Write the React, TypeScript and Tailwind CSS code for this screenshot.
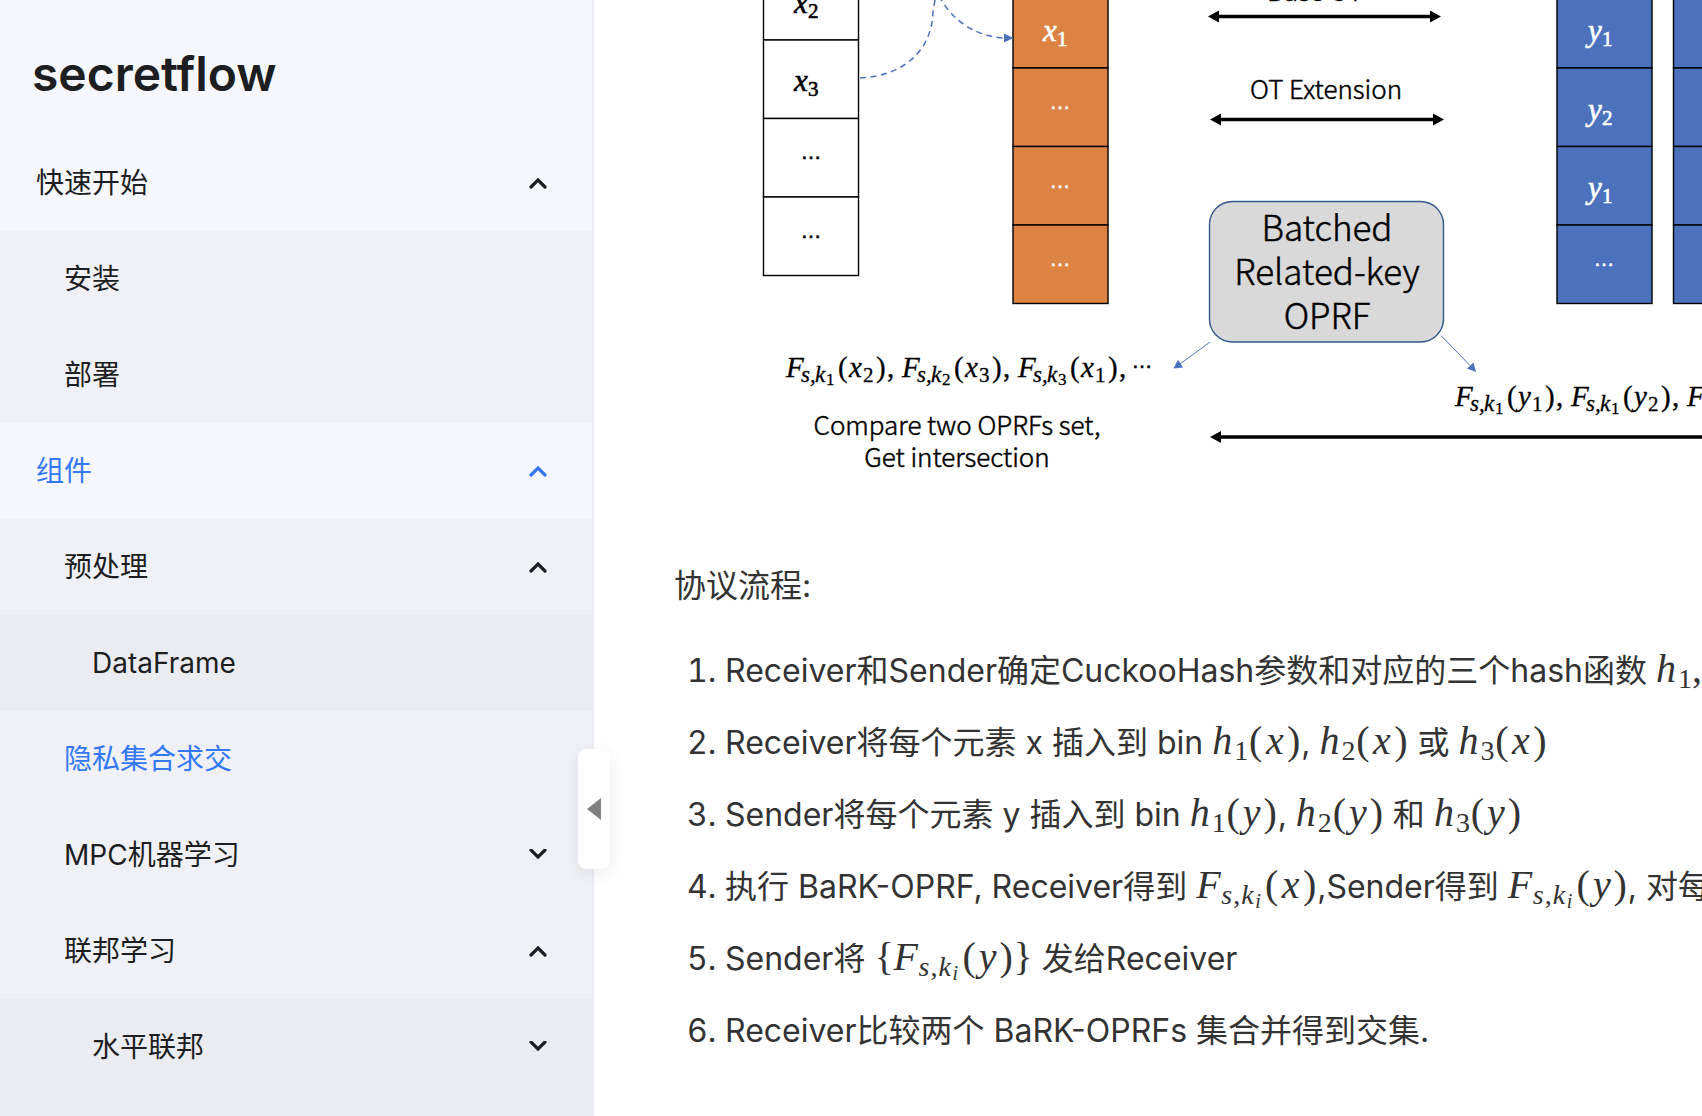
import type { ReactNode } from "react";

type Level = 0 | 1 | 2;

const PADDING: Record<Level, string> = { 0: "pl-9", 1: "pl-16", 2: "pl-[92px]" };

function Chevron({ up }: { up: boolean }) {
  return (
    <svg width="18" height="12" viewBox="0 0 18 12" fill="none" stroke="currentColor" strokeWidth="3.2" aria-hidden="true">
      <path d={up ? "M2 10 9 3 16 10" : "M2 1 9 8 16 1"} strokeLinecap="round" />
    </svg>
  );
}

function Group({ label, level, open = false, active = false, children }: { label: string; level: Level; open?: boolean; active?: boolean; children?: ReactNode }) {
  return (
    <li>
      <button
        type="button"
        aria-expanded={open}
        className={`flex h-24 w-full items-center justify-between pr-[45px] text-left ${PADDING[level]} ${active ? "text-[#3478f6]" : "text-[#1c1e21]"}`}
      >
        <span>{label}</span>
        <Chevron up={open} />
      </button>
      {children}
    </li>
  );
}

function Leaf({ label, level, active = false }: { label: string; level: Level; active?: boolean }) {
  return (
    <li>
      <a href="#" className={`flex h-24 items-center ${PADDING[level]} ${active ? "text-[#3478f6]" : "text-[#1c1e21]"}`}>
        {label}
      </a>
    </li>
  );
}

function Sidebar() {
  return (
    <aside className="relative h-full w-[594px] shrink-0 border-r-2 border-[#ebecf1] bg-[#f6f7fc]">
      <h1 className="flex h-[135px] items-center pt-3 pl-8 text-[48px] font-semibold text-[#1c1e21]">secretflow</h1>
      <nav className="text-[28px] leading-10">
        <ul>
          <Group label="快速开始" level={0} open>
            <ul className="bg-[#f0f1f7]">
              <Leaf label="安装" level={1} />
              <Leaf label="部署" level={1} />
            </ul>
          </Group>
          <Group label="组件" level={0} open active>
            <ul className="bg-[#f0f1f7]">
              <Group label="预处理" level={1} open>
                <ul className="bg-[#ebecf1]">
                  <Leaf label="DataFrame" level={2} />
                </ul>
              </Group>
              <Leaf label="隐私集合求交" level={1} active />
              <Group label="MPC机器学习" level={1} />
              <Group label="联邦学习" level={1} open>
                <ul className="bg-[#ebecf1] pb-24">
                  <Group label="水平联邦" level={2} />
                </ul>
              </Group>
            </ul>
          </Group>
        </ul>
      </nav>
      <button
        type="button"
        aria-label="收起侧边栏"
        className="absolute top-[749px] -right-[18px] flex h-30 w-8 items-center justify-center rounded-lg bg-white shadow-[0_4px_16px_rgba(0,0,0,0.08)]"
      >
        <svg width="14" height="22" viewBox="0 0 14 22" aria-hidden="true">
          <path d="M14 0V22L0 11Z" fill="#808080" />
        </svg>
      </button>
    </aside>
  );
}

const MATH = "italic font-['Liberation_Serif',serif]";
const SERIF = "font-['Liberation_Serif',serif]";
const LABEL = "font-light font-['Noto_Sans_CJK_SC',sans-serif]";

function Cell({ x, y, fill }: { x: number; y: number; fill: string }) {
  return <rect x={x} y={y} width="95" height="78.5" fill={fill} stroke="#000" strokeWidth="1.4" />;
}

function Column({ x, top, fill }: { x: number; top: number; fill: string }) {
  return (
    <g>
      {[0, 1, 2, 3].map((row) => (
        <Cell key={row} x={x} y={top + row * 78.5} fill={fill} />
      ))}
    </g>
  );
}

function Dots({ x, y, fill = "#fff" }: { x: number; y: number; fill?: string }) {
  return (
    <text x={x} y={y} fill={fill} stroke={fill} strokeWidth="0.6" fontSize="21" textAnchor="middle" className="font-['Liberation_Sans',sans-serif]">
      …
    </text>
  );
}

function Entry({ x, y, name, sub, fill = "#fff" }: { x: number; y: number; name: string; sub: string; fill?: string }) {
  return (
    <text x={x} y={y} fill={fill} stroke={fill} strokeWidth="0.6" fontSize="31" className={MATH}>
      {name}
      <tspan x={x + 14} y={y + 5} fontSize="21" fontStyle="normal">
        {sub}
      </tspan>
    </text>
  );
}

function Oprf({ x, y, k, name, sub }: { x: number; y: number; k: string; name: string; sub: string }) {
  return (
    <text y={y} fontSize="29" stroke="#000" strokeWidth="0.3" className={MATH}>
      <tspan x={x}>F</tspan>
      <tspan x={x + 15} y={y + 5} fontSize="23">s,</tspan>
      <tspan x={x + 29} fontSize="23">k</tspan>
      <tspan x={x + 40} y={y + 8} fontSize="17" fontStyle="normal">{k}</tspan>
      <tspan x={x + 52} y={y} fontStyle="normal">(</tspan>
      <tspan x={x + 63}>{name}</tspan>
      <tspan x={x + 77} y={y + 5} fontSize="21" fontStyle="normal">{sub}</tspan>
      <tspan x={x + 90} y={y} fontStyle="normal">)</tspan>
      <tspan x={x + 101} fontStyle="normal">,</tspan>
    </text>
  );
}

function DoubleArrow({ x1, x2, y }: { x1: number; x2: number; y: number }) {
  return (
    <path
      d={`M${x1} ${y}l11-6v4.2H${x2 - 11}v-4.2l11 6l-11 6v-4.2H${x1 + 11}v4.2z`}
      fill="#000"
    />
  );
}

function Diagram() {
  return (
    <svg width="1028" height="500" viewBox="674 0 1028 500" className="block max-w-none" role="img" aria-label="BaRK-OPRF">
      <Column x={763.5} top={-38.5} fill="#fff" />
      <Column x={1013} top={-10.5} fill="#dc8344" />
      <Column x={1557} top={-10.5} fill="#4c72be" />
      <Column x={1673.5} top={-10.5} fill="#4c72be" />

      <Entry x={794} y={13} name="x" sub="2" fill="#000" />
      <Entry x={794} y={91} name="x" sub="3" fill="#000" />
      <Dots x={811} y={159} fill="#000" />
      <Dots x={811} y={238} fill="#000" />

      <Entry x={1043} y={41} name="x" sub="1" />
      <Dots x={1060} y={109} />
      <Dots x={1060} y={188} />
      <Dots x={1060} y={266} />

      <Entry x={1588} y={41} name="y" sub="1" />
      <Entry x={1588} y={120} name="y" sub="2" />
      <Entry x={1588} y={198} name="y" sub="1" />
      <Dots x={1604} y={266} />

      <g fill="none" stroke="#4c72be" strokeWidth="1.5" strokeDasharray="6 4.5">
        <path d="M860 78C904 76 932 50 933 12L936-6" />
        <path d="M939-4C952 20 974 36 1004 38" />
      </g>
      <path d="M1013.5 38 1004 33.5V42.5Z" fill="#4c72be" />

      <g fontSize="26" textAnchor="middle" stroke="#000" strokeWidth="0.5" className={LABEL}>
        <text x="1315" y="1">Base OT</text>
        <text x="1326" y="99">OT Extension</text>
        <text x="957" y="435">Compare two OPRFs set,</text>
        <text x="957" y="467">Get intersection</text>
      </g>
      <DoubleArrow x1={1208} x2={1441} y={16.5} />
      <DoubleArrow x1={1210} x2={1444} y={119.5} />
      <DoubleArrow x1={1210} x2={1900} y={437} />

      <rect x="1209.5" y="201.5" width="234" height="140.5" rx="23" fill="#d9d9d9" stroke="#35568f" strokeWidth="1.4" />
      <g fontSize="35" textAnchor="middle" stroke="#000" strokeWidth="0.5" className={LABEL}>
        <text x="1327" y="241">Batched</text>
        <text x="1327" y="285">Related-key</text>
        <text x="1327" y="329">OPRF</text>
      </g>

      <g stroke="#4c72be" strokeWidth="1">
        <path d="M1210 342 1180 364" />
        <path d="M1441 335.5 1470 365.5" />
      </g>
      <path d="M1173.5 368.5 1178 359.8 1183 367.5Z" fill="#4c72be" />
      <path d="M1476 372 1467 368.5 1473.5 362.5Z" fill="#4c72be" />

      <Oprf x={786} y={377} k="1" name="x" sub="2" />
      <Oprf x={902} y={377} k="2" name="x" sub="3" />
      <Oprf x={1018} y={377} k="3" name="x" sub="1" />
      <Dots x={1142} y={368} fill="#000" />

      <Oprf x={1455} y={406} k="1" name="y" sub="1" />
      <Oprf x={1571} y={406} k="1" name="y" sub="2" />
      <Oprf x={1687} y={406} k="1" name="y" sub="1" />
    </svg>
  );
}

const ATOM_WIDTH: Record<string, string> = { h: "w-[22px]", x: "w-[23px] text-center", y: "w-[22px] text-center" };

function Atom({ children }: { children: string }) {
  return <i className={`inline-block ${ATOM_WIDTH[children]}`}>{children}</i>;
}

function Paren({ children }: { children: string }) {
  return <span className="inline-block w-[15px] text-center">{children}</span>;
}

function MathText({ children }: { children: ReactNode }) {
  return <span className={`text-[40px] leading-none ${SERIF}`}>{children}</span>;
}

function Arg({ name }: { name: string }) {
  return (
    <>
      <Paren>(</Paren>
      <Atom>{name}</Atom>
      <Paren>)</Paren>
    </>
  );
}

function Hash({ n, arg }: { n: string; arg?: string }) {
  return (
    <MathText>
      <Atom>h</Atom>
      <sub className="bottom-[-6px] text-[28px]">{n}</sub>
      {arg && <Arg name={arg} />}
    </MathText>
  );
}

function KeyedF({ arg }: { arg: string }) {
  return (
    <>
      <i className="inline-block w-[25px]">F</i>
      <sub className="bottom-[-6px] text-[28px]">
        <i className="inline-block w-3">s</i>
        <span className="inline-block w-2">,</span>
        <i className="inline-block w-[14px]">k</i>
        <sub className="bottom-[-4px] inline-block w-[9px] text-[20px] italic">i</sub>
      </sub>
      <Arg name={arg} />
    </>
  );
}

function Article() {
  return (
    <main className="min-w-0 flex-1 overflow-hidden pl-20 text-[32px] leading-[56px] text-[#333333]">
      <Diagram />
      <p className="mt-[58px]">协议流程:</p>
      <ol className="mt-[29px] list-decimal space-y-4 pl-[51px] whitespace-nowrap">
        <li>
          Receiver和Sender确定CuckooHash参数和对应的三个hash函数 <Hash n="1" />
          <MathText>,</MathText>
        </li>
        <li>
          Receiver将每个元素 x 插入到 bin <Hash n="1" arg="x" />, <Hash n="2" arg="x" /> 或 <Hash n="3" arg="x" />
        </li>
        <li>
          Sender将每个元素 y 插入到 bin <Hash n="1" arg="y" />, <Hash n="2" arg="y" /> 和 <Hash n="3" arg="y" />
        </li>
        <li>
          执行 BaRK-OPRF, Receiver得到 <MathText><KeyedF arg="x" /></MathText>,Sender得到 <MathText><KeyedF arg="y" /></MathText>, 对每
        </li>
        <li>
          Sender将 <MathText>{"{"}<KeyedF arg="y" />{"}"}</MathText> 发给Receiver
        </li>
        <li>Receiver比较两个 BaRK-OPRFs 集合并得到交集.</li>
      </ol>
    </main>
  );
}

export default function App() {
  return (
    <div className="flex h-screen overflow-hidden bg-white font-['Inter','Noto_Sans_CJK_SC',sans-serif]">
      <Sidebar />
      <Article />
    </div>
  );
}
